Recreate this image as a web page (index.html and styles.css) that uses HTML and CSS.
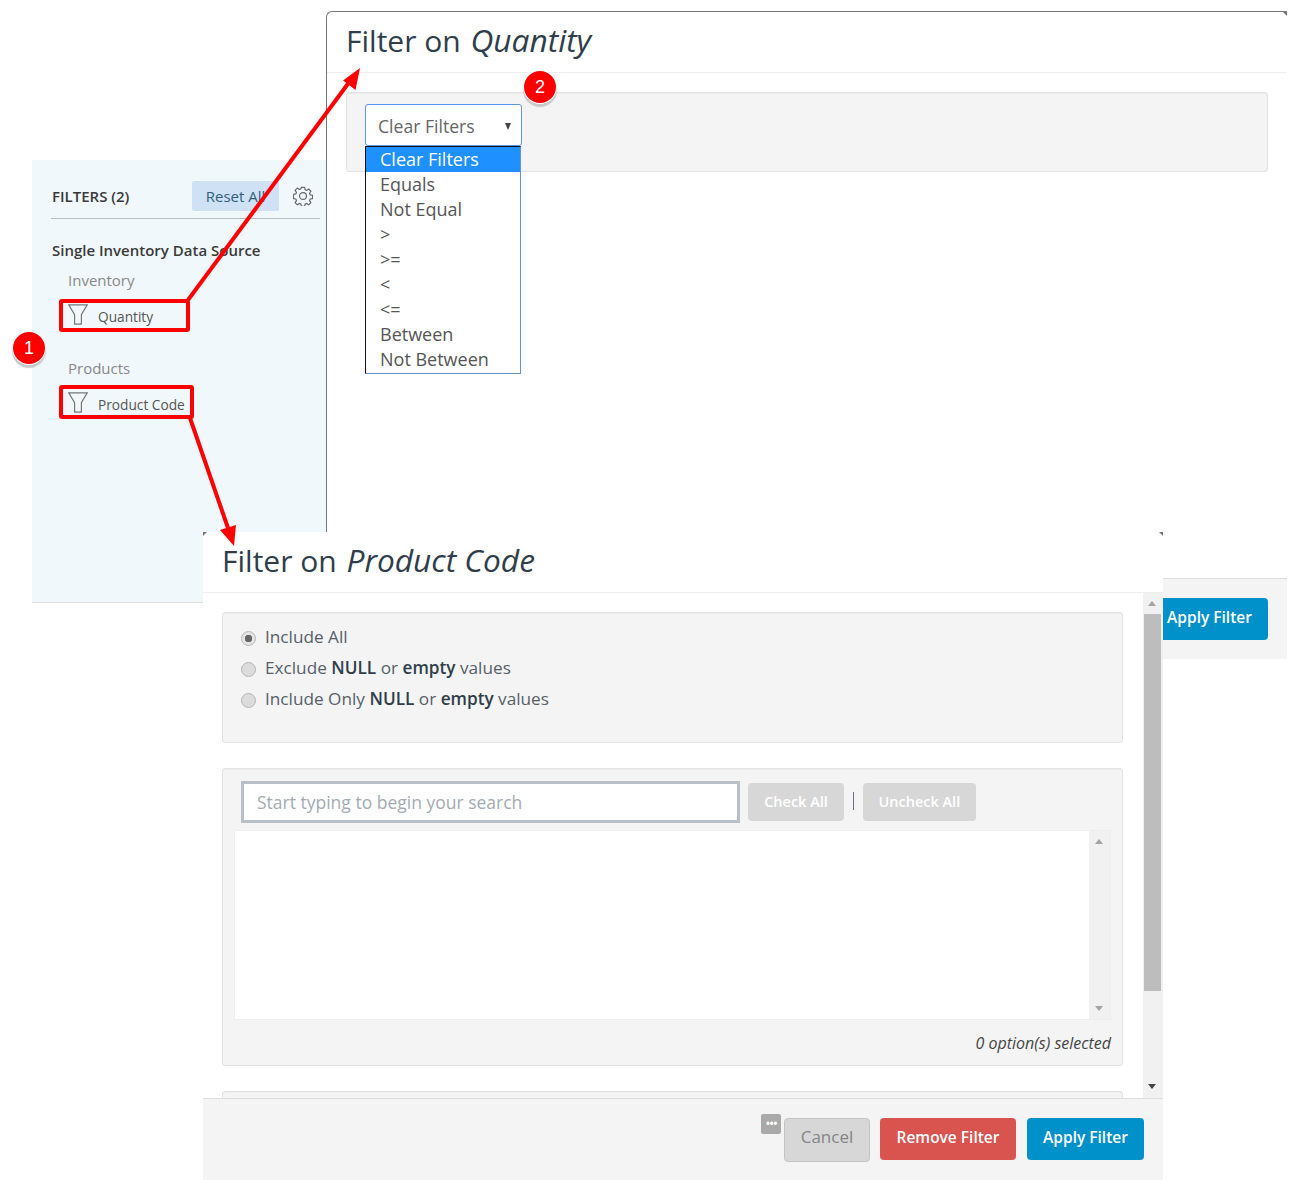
FILE: index.html
```html
<!DOCTYPE html>
<html lang="en">
<head>
  <meta charset="UTF-8" />
  <title>Filter on Quantity</title>
  <link rel="stylesheet" href="styles.css">
</head>
<body>

  <div class="canvas">

    <aside class="sidebar">
      <div class="sidebar-head">
        <span class="sidebar-title">FILTERS (2)</span>
        <button class="reset-btn">Reset All</button>
        <svg class="gear" width="20" height="20" viewBox="0 0 22 22" fill="none" stroke="#666" stroke-width="1.300" stroke-linejoin="round">
          <path d="M9.200 1.500h3.600l.5 2.600 1.700.7 2.200-1.500 2.500 2.500-1.500 2.200.7 1.700 2.600.5v3.600l-2.600.5-.7 1.700 1.500 2.200-2.500 2.500-2.200-1.500-1.700.7-.5 2.600H9.200l-.5-2.600-1.700-.7-2.200 1.500-2.500-2.500 1.500-2.200-.7-1.700-2.600-.5V9.200l2.600-.5.7-1.700-1.500-2.200 2.500-2.500 2.200 1.500 1.700-.7z"/>
          <circle cx="11" cy="11" r="3.800"/>
        </svg>
      </div>
      <h4 class="source-name">Single Inventory Data Source</h4>
      <div class="group-name">Inventory</div>
      <div class="filter-item">
        <svg width="20" height="21" viewBox="0 0 20 21" fill="none" stroke="#777" stroke-width="1.2"><path d="M.8.8h18.400l-5.800 9.800v9.600H6.600v-9.600z"/></svg>
        <span>Quantity</span>
      </div>
      <div class="group-name group-products">Products</div>
      <div class="filter-item">
        <svg width="20" height="21" viewBox="0 0 20 21" fill="none" stroke="#777" stroke-width="1.2"><path d="M.8.8h18.400l-5.800 9.800v9.600H6.600v-9.600z"/></svg>
        <span>Product Code</span>
      </div>
    </aside>

    <section class="dialog dialog-quantity">
      <span class="corner corner-tr"></span>
      <header class="dialog-head">
        <h2>Filter on <em>Quantity</em></h2>
      </header>
      <div class="dialog-body">
        <div class="panel panel-select"></div>
      </div>
      <footer class="dialog-foot">
        <button class="btn btn-apply">Apply Filter</button>
      </footer>
    </section>

    <div class="select-box">
      <div class="select-value">Clear Filters <span class="select-caret"></span></div>
      <ul class="select-list">
        <li class="selected">Clear Filters</li>
        <li>Equals</li>
        <li>Not Equal</li>
        <li>&gt;</li>
        <li>&gt;=</li>
        <li>&lt;</li>
        <li>&lt;=</li>
        <li>Between</li>
        <li>Not Between</li>
      </ul>
    </div>

    <section class="dialog dialog-product">
      <span class="corner corner-tl"></span>
      <span class="corner corner-tr"></span>
      <span class="corner corner-bl"></span>
      <span class="corner corner-br"></span>
      <header class="dialog-head">
        <h2>Filter on <em>Product Code</em></h2>
      </header>
      <div class="dialog-body scroll-body">
        <div class="scroll-content">
          <div class="panel panel-radios">
            <div class="radio-row"><span class="radio checked"></span>Include All</div>
            <div class="radio-row"><span class="radio"></span><span>Exclude <b>NULL</b> or <b>empty</b> values</span></div>
            <div class="radio-row"><span class="radio"></span><span>Include Only <b>NULL</b> or <b>empty</b> values</span></div>
          </div>
          <div class="panel panel-search">
            <div class="search-row">
              <input class="search-input" type="text" placeholder="Start typing to begin your search" />
              <button class="btn btn-muted btn-check">Check All</button>
              <span class="divider"></span>
              <button class="btn btn-muted">Uncheck All</button>
            </div>
            <div class="option-list">
              <div class="option-track">
                <span class="arrow-up"></span>
                <span class="arrow-down"></span>
              </div>
            </div>
            <div class="option-count">0 option(s) selected</div>
          </div>
          <div class="panel panel-next"></div>
        </div>
        <div class="scrollbar">
          <span class="arrow-up"></span>
          <div class="scroll-thumb"></div>
          <span class="arrow-down dark"></span>
        </div>
      </div>
      <footer class="dialog-foot">
        <span class="more-icon">•••</span>
        <button class="btn btn-cancel">Cancel</button>
        <button class="btn btn-remove">Remove Filter</button>
        <button class="btn btn-apply">Apply Filter</button>
      </footer>
    </section>

    <!-- annotations -->
    <div class="mark mark-quantity"></div>
    <div class="mark mark-product"></div>
    <svg class="arrows" width="1299" height="1192" viewBox="0 0 1299 1192">
      <g stroke="#f00" stroke-width="4" fill="#f00">
        <line x1="188" y1="300" x2="350" y2="81"/>
        <line x1="190" y1="418" x2="228" y2="528"/>
      </g>
      <polygon points="360,68 355.500,90 343,80.500" fill="#f00"/>
      <polygon points="234,546 220,530 236,525" fill="#f00"/>
    </svg>
    <div class="badge badge-one">1</div>
    <div class="badge badge-two">2</div>

  </div>

</body>
</html>
```

FILE: styles.css
```css
* {
  margin: 0;
  padding: 0;
  box-sizing: border-box;
}

body {
  background-color: white;
  font-family: "Open Sans", Arial, sans-serif;
  color: #2f3e4a;
  overflow: hidden;
}

button {
  font-family: inherit;
  border: none;
}

.canvas {
  position: relative;
  width: 1299px;
  height: 1192px;
  overflow: hidden;
}

/* sidebar */
.sidebar {
  position: absolute;
  left: 32px;
  top: 160px;
  width: 295px;
  height: 443px;
  background-color: #f1f8fc;
  border-bottom: 1px solid #ddd;
  padding: 21px 7px 0 19px;
}

.sidebar-head {
  display: flex;
  align-items: center;
  height: 38px;
  padding-bottom: 8px;
  border-bottom: 1px solid #bbb;
}

.sidebar-title {
  font-size: 15px;
  font-weight: 600;
  color: #3a3a3a;
  width: 141px;
  padding-left: 1px;
}

.reset-btn {
  width: 87px;
  height: 30px;
  background-color: #cfe2f5;
  color: #30607c;
  border-radius: 2px;
  font-size: 15px;
}

.gear {
  margin-left: 14px;
}

.source-name {
  font-size: 15px;
  font-weight: 600;
  color: #3a3a3a;
  margin-top: 22px;
  padding-left: 1px;
  line-height: 19px;
}

.group-name {
  font-size: 15px;
  line-height: 20px;
  color: #888;
  margin: 10px 0 0 17px;
}

.group-products {
  margin-top: 31px;
}

.filter-item {
  display: flex;
  align-items: flex-start;
  gap: 10px;
  margin: 13px 0 0 17px;
  height: 24px;
  font-size: 13.700px;
  color: #555;
}

.filter-item svg {
  margin-top: 1px;
}

.filter-item span {
  margin-top: 4px;
}

/* dialogs */
.dialog {
  position: absolute;
  display: flex;
  flex-direction: column;
  background-color: white;
  width: 961px;
  height: 648px;
}

.dialog-quantity {
  left: 326px;
  top: 11px;
  border-top: 1px solid #777;
  border-left: 1px solid #777;
  border-top-left-radius: 6px;
}

.dialog-quantity .dialog-foot {
  height: 81px;
}

.dialog-product {
  left: 203px;
  top: 532px;
  width: 960px;
}

.corner {
  position: absolute;
  width: 0;
  height: 0;
  border: 2px solid transparent;
}

.corner-tl { left: 0; top: 0; border-left-color: #777; border-top-color: #777; }
.corner-tr { right: 0; top: 0; border-right-color: #777; border-top-color: #777; }
.corner-bl { left: 0; bottom: 0; border-left-color: #777; border-bottom-color: #777; }
.corner-br { right: 0; bottom: 0; border-right-color: #777; border-bottom-color: #777; }

.dialog-head {
  height: 61px;
  padding: 7px 19px 0;
  border-bottom: 1px solid #eee;
}

.dialog-head h2 {
  font-size: 30px;
  line-height: 41px;
  font-weight: 400;
  color: #2f3e4a;
}

.dialog-head em {
  font-size: 31.700px;
  margin-left: 2px;
}

.dialog-body {
  flex: 1;
  min-height: 0;
  padding: 19px 19px 0;
}

.dialog-foot {
  display: flex;
  justify-content: flex-end;
  align-items: flex-start;
  gap: 11px;
  height: 82px;
  padding: 19px 19px 0 0;
  background-color: #f4f4f4;
  border-top: 1px solid #ddd;
}

.dialog-product .dialog-foot {
  position: relative;
}

.panel {
  background-color: #f4f4f4;
  border: 1px solid #e3e3e3;
  border-radius: 3px;
  box-shadow: inset 0 1px 1px rgba(0, 0, 0, 0.03);
}

.panel-select {
  height: 80px;
}

/* select */
.select-box {
  position: absolute;
  left: 365px;
  top: 104px;
  width: 157px;
}

.select-value {
  position: relative;
  height: 42px;
  background-color: white;
  border: 1px solid #5b95ee;
  border-radius: 3px;
  padding-left: 12px;
  font-size: 17.600px;
  line-height: 42px;
  color: #666;
}

.select-caret {
  position: absolute;
  right: 10px;
  top: 18px;
  border-left: 3.500px solid transparent;
  border-right: 3.500px solid transparent;
  border-top: 7px solid #444;
}

.select-list {
  list-style: none;
  width: 156px;
  height: 228px;
  background-color: white;
  border: 1px solid #6d8fd3;
  border-left-color: #111;
  border-top-color: #111;
  font-size: 18px;
  color: #555;
}

.select-list li {
  height: 25px;
  line-height: 25px;
  padding-left: 14px;
}

.select-list .selected {
  background-color: #1e90ff;
  color: white;
}

/* product dialog body */
.scroll-body {
  display: flex;
  padding: 0;
  overflow: hidden;
}

.scroll-content {
  flex: 1;
  padding: 19px 20px 0 19px;
  overflow: hidden;
}

.scrollbar {
  position: relative;
  width: 20px;
  background-color: #f1f1f1;
  padding: 21px 2px 0 1px;
}

.scroll-thumb {
  height: 377px;
  background-color: #bdbdbd;
}

.arrow-up,
.arrow-down {
  position: absolute;
  left: 5px;
  border-left: 4.500px solid transparent;
  border-right: 4.500px solid transparent;
}

.arrow-up {
  top: 8px;
  border-bottom: 5px solid #a3a3a3;
}

.arrow-down {
  bottom: 8px;
  border-top: 5px solid #a3a3a3;
}

.arrow-down.dark {
  bottom: 9px;
  border-top-color: #444;
}

.panel-radios {
  height: 131px;
  padding-top: 8px;
}

.radio-row {
  display: flex;
  align-items: center;
  gap: 9px;
  height: 31px;
  padding-left: 18px;
  font-size: 17.200px;
  color: #566069;
}

.radio-row b {
  font-weight: 600;
  color: #2f3e4a;
}

.radio {
  width: 15px;
  height: 15px;
  margin-top: 4px;
  border-radius: 50%;
  border: 1px solid #b5b5b5;
  background-color: #dcdcdc;
}

.radio.checked {
  background: radial-gradient(circle, #666 0, #666 3.500px, #e4e4e4 4px);
}

.panel-search {
  position: relative;
  height: 298px;
  margin-top: 25px;
  padding: 12px 11px 0;
}

.search-row {
  display: flex;
  align-items: flex-start;
  padding-left: 7px;
}

.search-input {
  width: 499px;
  height: 42px;
  border: 3px solid #b8bfc6;
  padding-left: 13px;
  font-family: inherit;
  font-size: 17.500px;
  background-color: white;
  outline: none;
}

.search-input::placeholder {
  color: #a3abb2;
  opacity: 1;
}

.btn {
  border-radius: 4px;
  padding-bottom: 4px;
  font-size: 15.500px;
  font-weight: 600;
  color: white;
}

.btn-muted {
  height: 38px;
  margin-top: 2px;
  padding: 0 15.500px 1px;
  background-color: #d7d7d7;
  font-size: 14.500px;
}

.btn-check {
  margin-left: 8px;
  width: 96px;
}

.divider {
  width: 1px;
  height: 18px;
  margin: 11px 9px 0;
  background-color: #677380;
}

.option-list {
  position: relative;
  display: flex;
  justify-content: flex-end;
  height: 190px;
  width: 877px;
  margin-top: 7px;
  background-color: white;
  border: 1px solid #eee;
}

.option-track {
  position: relative;
  width: 21px;
  background-color: #f1f1f1;
}

.option-track .arrow-up,
.option-track .arrow-down {
  left: 6px;
}

.option-count {
  margin-top: 12px;
  text-align: right;
  font-size: 16px;
  font-style: italic;
  color: #444;
}

.panel-next {
  height: 60px;
  margin-top: 25px;
}

/* footer buttons */
.btn-apply {
  width: 117px;
  height: 42px;
  background-color: #0091cb;
}

.btn-remove {
  width: 136px;
  height: 42px;
  background-color: #d9534f;
}

.btn-cancel {
  width: 86px;
  height: 44px;
  margin-right: -1px;
  padding-bottom: 8px;
  background-color: #d7d7d7;
  border: 1px solid #c4c4c4;
  color: #858585;
  font-weight: 400;
  font-size: 17px;
}

.more-icon {
  position: absolute;
  left: 558px;
  top: 15px;
  width: 20px;
  height: 20px;
  border-radius: 2px;
  background-color: #a9a9a9;
  color: white;
  font-size: 14px;
  line-height: 19px;
  letter-spacing: -1.500px;
  text-align: center;
}

/* annotations */
.mark {
  position: absolute;
  border: 4px solid #f00;
  border-radius: 3px;
}

.mark-quantity {
  left: 59px;
  top: 299px;
  width: 131px;
  height: 33px;
}

.mark-product {
  left: 59px;
  top: 385px;
  width: 135px;
  height: 34px;
}

.arrows {
  position: absolute;
  left: 0;
  top: 0;
  pointer-events: none;
}

.badge {
  position: absolute;
  width: 32px;
  height: 32px;
  border-radius: 50%;
  background-color: #f00;
  color: white;
  font-family: "Liberation Sans", Arial, sans-serif;
  font-size: 18px;
  line-height: 32px;
  text-align: center;
  box-shadow: 0 0 0 1px white, 0 3px 1px 1px #c9c9c9;
}

.badge-one {
  left: 13px;
  top: 332px;
}

.badge-two {
  left: 524px;
  top: 71px;
}
```
